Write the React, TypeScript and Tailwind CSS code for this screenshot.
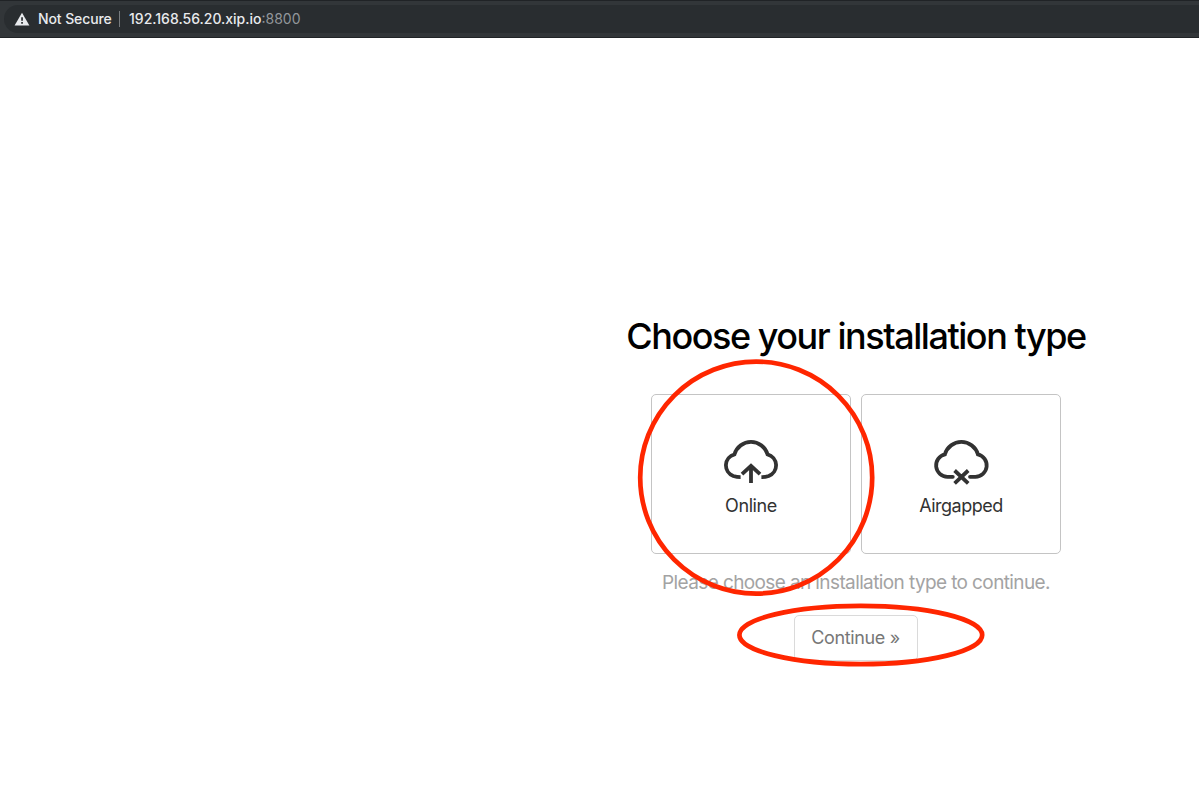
import type { ReactNode } from 'react';

function OnlineIcon() {
  return (
    <svg width="54" height="45" viewBox="0 0 54 45" fill="none" stroke="#323232" strokeWidth="3.8" className="block">
      <path d="M16.6 37.2Q13 37.2 9.3 36A11.4 11.4 0 0 1 10.5 14.3A17.2 17.2 0 0 1 43.5 14.3A11.4 11.4 0 0 1 44.7 36Q41 37.2 37.4 37.2" />
      <path d="M18 34.2L27 25.9L36 34.2M27 43V27" />
    </svg>
  );
}

function AirgappedIcon() {
  return (
    <svg width="54" height="45" viewBox="0 0 54 45" fill="none" stroke="#323232" strokeWidth="3.8" className="block overflow-visible">
      <g transform="translate(0.4 0)">
        <path strokeLinecap="round" d="M18.4 36.8H13A11.4 11.4 0 0 1 10.5 14.3A17.2 17.2 0 0 1 43.5 14.3A11.4 11.4 0 0 1 41 36.8H35.6" />
        <path d="M20.2 30.5L33.8 43.3M33.8 30.5L20.2 43.3" />
      </g>
    </svg>
  );
}

function Card({ icon, label }: { icon: ReactNode; label: ReactNode }) {
  return (
    <button className="flex h-40 w-[200px] flex-col items-center rounded-[5px] border border-[#c4c4c4] pt-[45px] text-[18px] leading-6 text-[#323232]">
      {icon}
      <span className="mt-[9px]">{label}</span>
    </button>
  );
}

export default function App() {
  return (
    <div className="relative h-[794px] w-[1199px] overflow-hidden bg-white font-['Inter',sans-serif]">
      <header className="h-[38px] border-t border-b border-[#202326] bg-[#323639] pt-1 pl-1">
        <div className="flex h-7 items-center rounded-l-full bg-[#292d30] pl-[10px] text-[14px] leading-5 text-[#e8eaed]">
          <svg width="16" height="14" viewBox="0 0 16 14" className="shrink-0">
            <path d="M8 .8L15.4 13.4H.6Z" fill="#e8eaed" />
            <path d="M7.2 5.2h1.7v3.5H7.2zM7.2 10h1.7v1.7H7.2z" fill="#292d30" />
          </svg>
          <span className="ml-2 w-[74px] whitespace-nowrap font-medium tracking-[-0.1px]">Not Secure</span>
          <span className="ml-[7px] h-4 w-px bg-[#777b7e]" />
          <span className="ml-[9px] whitespace-nowrap">
            <span className="font-medium">192.168.56.20.xip.io</span>
            <span className="text-[#92969a]">:8800</span>
          </span>
        </div>
      </header>

      <main className="ml-[611px] flex w-[490px] flex-col items-center pt-[276px]">
        <h1 className="whitespace-nowrap text-[36px] font-medium leading-[44px] tracking-[-1.45px] text-black">
          Choose your installation type
        </h1>
        <div className="mt-[36px] flex gap-[10px]">
          <Card icon={<OnlineIcon />} label={<span className="tracking-[-0.4px]">Online</span>} />
          <Card icon={<AirgappedIcon />} label={<span className="tracking-[-0.5px]">Airgapped</span>} />
        </div>
        <p className="mt-[17px] whitespace-nowrap text-[19px] leading-6 tracking-[-0.61px] text-[#a3a3a3]">
          Please choose an installation type to continue.
        </p>
        <button className="mt-[20px] h-[46px] w-[124px] whitespace-nowrap rounded-[5px] border border-[#dadada] pr-[7px] pb-[2px] pl-[6px] text-[18px] tracking-[-0.35px] text-[#777777]">
          Continue »
        </button>
      </main>

      <svg width="1199" height="794" viewBox="0 0 1199 794" fill="none" stroke="#ff2600" strokeWidth="4.7" className="pointer-events-none absolute inset-0">
        <circle cx="756.2" cy="477.6" r="116" />
        <ellipse cx="860.8" cy="635" rx="121.4" ry="29.2" />
      </svg>
    </div>
  );
}
